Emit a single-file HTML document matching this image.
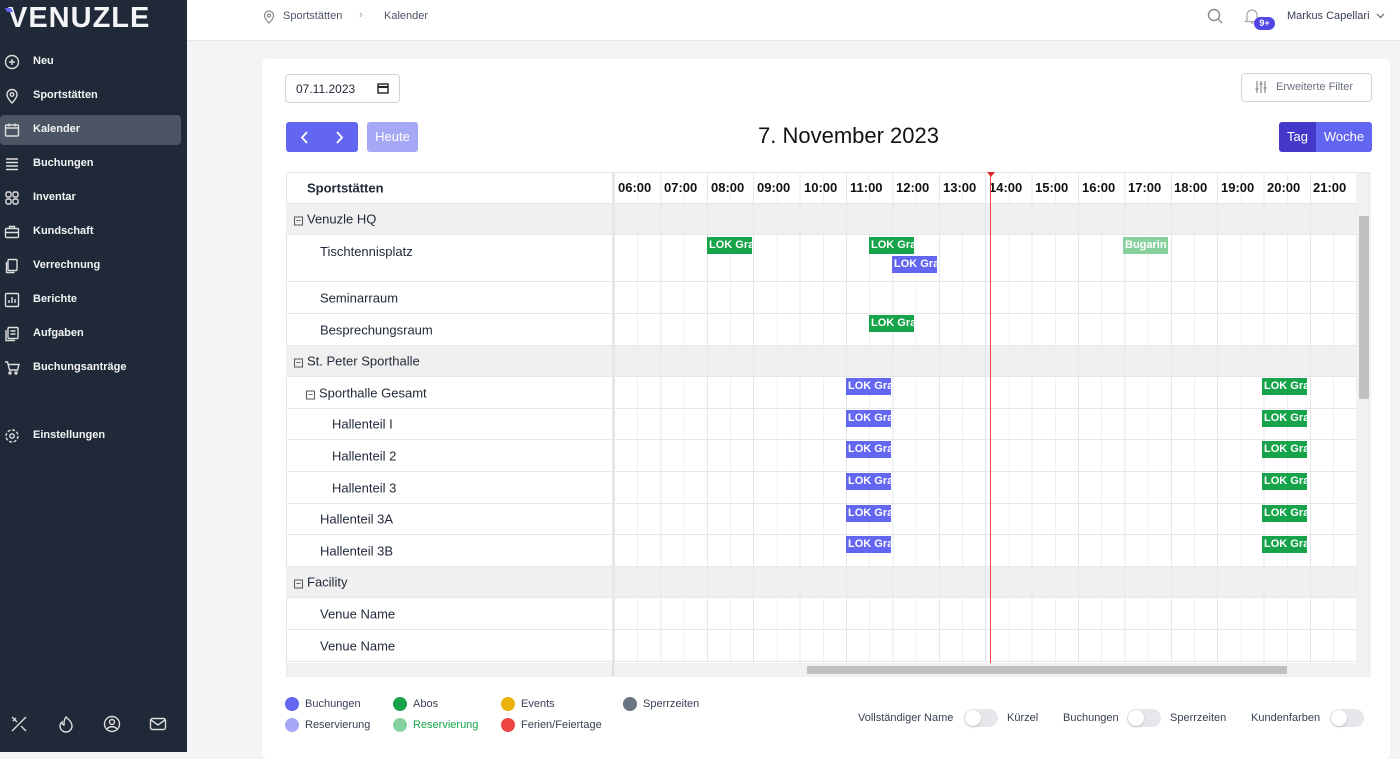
<!DOCTYPE html>
<html><head><meta charset="utf-8"><style>
*{box-sizing:border-box;margin:0;padding:0}
body{width:1400px;height:752px;overflow:hidden;background:#f3f4f6;font-family:"Liberation Sans",sans-serif;position:relative;color:#1f2937}
.a{position:absolute}
#sb{left:0;top:0;width:187px;height:752px;background:#1f2937;color:#fff}
.nav{position:absolute;left:0;width:187px;height:30px;font-size:11px;font-weight:bold;color:#f3f4f6}
.nav span{position:absolute;left:33px;top:8px}
.nav svg{position:absolute;left:4px;top:7px}
#top{left:187px;top:0;width:1213px;height:41px;background:#fff;border-bottom:1px solid #e5e7eb}
#card{left:262px;top:59px;width:1128px;height:700px;background:#fff;border-radius:6px}
.row{position:absolute;left:286px;width:1071px;border-bottom:1px solid #e5e7eb;font-size:13px}
.row .l{position:absolute;top:50%;transform:translateY(-50%)}
.g{background:#f0f0f0}
.ev{position:absolute;height:17px;width:45px;color:#fff;font-size:11px;font-weight:bold;line-height:17px;padding-left:2px;overflow:hidden;white-space:nowrap}
.gr{background:#16a34a}.bl{background:#6366f1}
.box{display:inline-block;width:9px;height:9px;border:1px solid #555;font-size:9px;line-height:7px;text-align:center;margin-right:4px;vertical-align:0px}
.hr{position:absolute;top:180px;font-size:13px;font-weight:bold;color:#111}
.lg{position:absolute;font-size:11px;color:#374151}
.lg i{position:absolute;left:-20px;top:-1px;width:14px;height:14px;border-radius:50%}
.tg{position:absolute;width:34px;height:18px;border-radius:9px;background:#e5e7eb}
.tg:after{content:"";position:absolute;left:1px;top:1px;width:16px;height:16px;border-radius:50%;background:#fff;box-shadow:0 1px 2px rgba(0,0,0,.2)}
</style></head><body>
<div id="sb" class="a">
<div class="a" style="left:8px;top:2px;font-size:29px;font-weight:bold;letter-spacing:1px;color:#f3f4f6">VENUZLE</div>
<div class="a" style="left:6px;top:8px;width:6px;height:4px;background:#6366f1;transform:skewX(30deg)"></div>
<div class="a" style="left:0;top:115px;width:181px;height:30px;background:#4b5563;border-radius:4px"></div>
<div class="nav" style="top:47px"><svg width="16" height="16" fill="none" stroke="#ddd" stroke-width="1.4"><circle cx="8" cy="8" r="6.5"/><path d="M8 5v6M5 8h6"/></svg><span>Neu</span></div>
<div class="nav" style="top:81px"><svg width="16" height="16" fill="none" stroke="#ddd" stroke-width="1.4"><path d="M8 15s-5-5-5-8.5a5 5 0 0110 0C13 10 8 15 8 15z"/><circle cx="8" cy="6.5" r="1.8"/></svg><span>Sportstätten</span></div>
<div class="nav" style="top:115px"><svg width="16" height="16" fill="none" stroke="#ddd" stroke-width="1.4"><rect x="1.5" y="3" width="13" height="11" rx="1"/><path d="M1.5 6h13M5 1.5v3M11 1.5v3"/></svg><span>Kalender</span></div>
<div class="nav" style="top:149px"><svg width="16" height="16" fill="none" stroke="#ddd" stroke-width="1.4"><path d="M2 3h12M2 6.5h12M2 10h12M2 13.5h12"/></svg><span>Buchungen</span></div>
<div class="nav" style="top:183px"><svg width="16" height="16" fill="none" stroke="#ddd" stroke-width="1.4"><rect x="2" y="2" width="5" height="5" rx="1.5"/><rect x="9" y="2" width="5" height="5" rx="1.5"/><rect x="2" y="9" width="5" height="5" rx="1.5"/><rect x="9" y="9" width="5" height="5" rx="1.5"/></svg><span>Inventar</span></div>
<div class="nav" style="top:217px"><svg width="16" height="16" fill="none" stroke="#ddd" stroke-width="1.4"><rect x="1.5" y="4.5" width="13" height="9" rx="1"/><path d="M5.5 4.5V2.5h5v2M1.5 8.5h13"/></svg><span>Kundschaft</span></div>
<div class="nav" style="top:251px"><svg width="16" height="16" fill="none" stroke="#ddd" stroke-width="1.4"><rect x="4" y="1.5" width="9" height="11" rx="1"/><path d="M2.5 4v10.5h8"/></svg><span>Verrechnung</span></div>
<div class="nav" style="top:285px"><svg width="16" height="16" fill="none" stroke="#ddd" stroke-width="1.4"><rect x="1.5" y="1.5" width="13" height="13" rx="1"/><path d="M5 11V8M8 11V5M11 11V7"/></svg><span>Berichte</span></div>
<div class="nav" style="top:319px"><svg width="16" height="16" fill="none" stroke="#ddd" stroke-width="1.4"><rect x="4" y="1.5" width="10" height="11" rx="1"/><path d="M2 4v10.5h9M6.5 5h5M6.5 8h5"/></svg><span>Aufgaben</span></div>
<div class="nav" style="top:353px"><svg width="16" height="16" fill="none" stroke="#ddd" stroke-width="1.4"><path d="M1 2h2.5l2 8h8l1.5-5.5H4.5"/><circle cx="6" cy="13" r="1"/><circle cx="12" cy="13" r="1"/></svg><span>Buchungsanträge</span></div>
<div class="nav" style="top:421px"><svg width="16" height="16" fill="none" stroke="#ddd" stroke-width="1.4"><circle cx="8" cy="8" r="2.2"/><circle cx="8" cy="8" r="6" stroke-dasharray="3 1.7"/></svg><span>Einstellungen</span></div>
<svg class="a" style="left:10px;top:715px" width="18" height="18" fill="none" stroke="#ddd" stroke-width="1.4"><path d="M2 16L16 2M2 2l5 5M11 11l5 5M3 6l3-3"/></svg>
<svg class="a" style="left:57px;top:715px" width="18" height="18" fill="none" stroke="#ddd" stroke-width="1.4"><path d="M9 2c3 3 6 5 6 9a6 6 0 01-12 0c0-2 1-3 2-4 0 2 1 3 2 3 0-3 0-5 2-8z"/></svg>
<svg class="a" style="left:103px;top:715px" width="18" height="18" fill="none" stroke="#ddd" stroke-width="1.4"><circle cx="9" cy="9" r="7.5"/><circle cx="9" cy="7" r="2.5"/><path d="M4 14c2-3 8-3 10 0"/></svg>
<svg class="a" style="left:149px;top:715px" width="18" height="18" fill="none" stroke="#ddd" stroke-width="1.4"><rect x="1.5" y="3.5" width="15" height="11" rx="2"/><path d="M2 5l7 5 7-5"/></svg>
</div>
<div id="top" class="a">
<svg class="a" style="left:76px;top:10px" width="12" height="14" fill="none" stroke="#888" stroke-width="1.2"><path d="M6 13s-4.5-4-4.5-7.5a4.5 4.5 0 019 0C10.5 9 6 13 6 13z"/><circle cx="6" cy="5.5" r="1.5"/></svg>
<div class="a" style="left:96px;top:10px;font-size:11px;color:#4b5563">Sportstätten</div>
<div class="a" style="left:172px;top:9px;font-size:11px;color:#9ca3af">›</div>
<div class="a" style="left:197px;top:10px;font-size:11px;color:#4b5563">Kalender</div>
<svg class="a" style="left:1020px;top:8px" width="16" height="16" fill="none" stroke="#888" stroke-width="1.4"><circle cx="7" cy="7" r="5.5"/><path d="M11 11l4 4"/></svg>
<svg class="a" style="left:1057px;top:7px" width="16" height="18" fill="none" stroke="#aaa" stroke-width="1.3"><path d="M3 13V8a5 5 0 0110 0v5l1.5 1.5h-13zM6.5 16h3"/></svg>
<div class="a" style="left:1067px;top:17px;width:21px;height:13px;border-radius:7px;background:#4f46e5;color:#fff;font-size:9px;font-weight:bold;text-align:center;line-height:13px">9+</div>
<div class="a" style="left:1100px;top:10px;font-size:11px;color:#374151">Markus Capellari</div>
<svg class="a" style="left:1189px;top:13px" width="9" height="6" fill="none" stroke="#666" stroke-width="1.2"><path d="M1 1l3.5 3.5L8 1"/></svg>
</div>
<div id="card" class="a"></div>
<div class="a" style="left:285px;top:74px;width:115px;height:29px;border:1px solid #d1d5db;border-radius:4px;background:#fff;font-size:12px;padding:7px 10px">07.11.2023</div>
<svg class="a" style="left:377px;top:82px" width="12" height="12" fill="none" stroke="#222" stroke-width="1.4"><rect x="1" y="2" width="10" height="9"/><path d="M1 5h10" stroke-width="2"/></svg>
<div class="a" style="left:1241px;top:73px;width:131px;height:29px;border:1px solid #d1d5db;border-radius:4px;font-size:11px;color:#6b7280;padding:7px 0 0 34px">Erweiterte Filter</div>
<svg class="a" style="left:1255px;top:80px" width="12" height="14" fill="none" stroke="#888" stroke-width="1.2"><path d="M2 1v12M6 1v12M10 1v12M0.5 9h3M4.5 4h3M8.5 8h3"/></svg>
<div class="a" style="left:286px;top:122px;width:72px;height:30px;background:#6366f1;border-radius:3px"></div>
<svg class="a" style="left:299px;top:131px" width="48" height="13" fill="none" stroke="#fff" stroke-width="1.8"><path d="M8 1L3 6.5 8 12M38 1l5 5.5-5 5.5"/></svg>
<div class="a" style="left:367px;top:122px;width:51px;height:30px;background:#a5a8f5;border-radius:3px;color:#fff;font-size:13px;text-align:center;line-height:30px">Heute</div>
<div class="a" style="left:758px;top:123px;font-size:22px;color:#111">7. November 2023</div>
<div class="a" style="left:1279px;top:122px;width:37px;height:30px;background:#4338ca;color:#fff;font-size:13px;text-align:center;line-height:30px;border-radius:3px 0 0 3px">Tag</div>
<div class="a" style="left:1316px;top:122px;width:56px;height:30px;background:#6366f1;color:#fff;font-size:13px;text-align:center;line-height:30px;border-radius:0 3px 3px 0">Woche</div>

<!-- table -->
<div class="a" style="left:286px;top:172px;width:1085px;height:505px;border:1px solid #e5e7eb;background:#fff"></div>
<div class="a" style="left:286px;top:204px;width:1071px;height:459px;"></div>
<div class="row g" style="top:204px;height:31px"></div>
<div class="row g" style="top:346px;height:31px"></div>
<div class="row g" style="top:567px;height:31px"></div>
<div class="a" style="left:614px;top:172px;width:743px;height:491px;background:repeating-linear-gradient(90deg,#e5e7eb 0 1px,transparent 1px 23.2px,#f0f0f0 23.2px 24.2px,transparent 24.2px 46.4px)"></div>
<div class="a" style="left:286px;top:203px;width:1071px;border-top:1px solid #e5e7eb"></div>
<div class="a" style="left:612px;top:172px;width:2px;height:491px;background:#e5e7eb"></div>
<div class="row" style="top:172px;height:32px;border:none"><span class="l" style="left:21px;font-weight:bold">Sportstätten</span></div>
<div class="row" style="top:204px;height:31px"><span class="l" style="left:8px"><span class="box">−</span>Venuzle HQ</span></div>
<div class="row" style="top:235px;height:47px"><span class="a" style="left:34px;top:9px">Tischtennisplatz</span></div>
<div class="row" style="top:282px;height:32px"><span class="l" style="left:34px">Seminarraum</span></div>
<div class="row" style="top:314px;height:32px"><span class="l" style="left:34px">Besprechungsraum</span></div>
<div class="row" style="top:346px;height:31px"><span class="l" style="left:8px"><span class="box">−</span>St. Peter Sporthalle</span></div>
<div class="row" style="top:377px;height:32px"><span class="l" style="left:20px"><span class="box">−</span>Sporthalle Gesamt</span></div>
<div class="row" style="top:409px;height:31px"><span class="l" style="left:46px">Hallenteil I</span></div>
<div class="row" style="top:440px;height:32px"><span class="l" style="left:46px">Hallenteil 2</span></div>
<div class="row" style="top:472px;height:32px"><span class="l" style="left:46px">Hallenteil 3</span></div>
<div class="row" style="top:504px;height:31px"><span class="l" style="left:34px">Hallenteil 3A</span></div>
<div class="row" style="top:535px;height:32px"><span class="l" style="left:34px">Hallenteil 3B</span></div>
<div class="row" style="top:567px;height:31px"><span class="l" style="left:8px"><span class="box">−</span>Facility</span></div>
<div class="row" style="top:598px;height:32px"><span class="l" style="left:34px">Venue Name</span></div>
<div class="row" style="top:630px;height:32px"><span class="l" style="left:34px">Venue Name</span></div>
<div class="hr" style="left:618px">06:00</div><div class="hr" style="left:664px">07:00</div><div class="hr" style="left:711px">08:00</div><div class="hr" style="left:757px">09:00</div><div class="hr" style="left:804px">10:00</div><div class="hr" style="left:850px">11:00</div><div class="hr" style="left:896px">12:00</div><div class="hr" style="left:943px">13:00</div><div class="hr" style="left:989px">14:00</div><div class="hr" style="left:1035px">15:00</div><div class="hr" style="left:1082px">16:00</div><div class="hr" style="left:1128px">17:00</div><div class="hr" style="left:1174px">18:00</div><div class="hr" style="left:1221px">19:00</div><div class="hr" style="left:1267px">20:00</div><div class="hr" style="left:1313px">21:00</div>
<div class="a" style="left:990px;top:176px;width:1px;height:487px;background:#ef4444"></div>
<div class="a" style="left:987px;top:172px;border-left:4px solid transparent;border-right:4px solid transparent;border-top:5px solid #dc2626"></div>
<div class="ev gr" style="left:707px;top:237px">LOK Graz</div>
<div class="ev gr" style="left:869px;top:237px">LOK Graz</div>
<div class="ev bl" style="left:892px;top:256px">LOK Graz</div>
<div class="ev" style="left:1123px;top:237px;background:#86d19e">Bugarin</div>
<div class="ev gr" style="left:869px;top:315px">LOK Graz</div>
<div class="ev bl" style="left:846px;top:378px">LOK Graz</div><div class="ev gr" style="left:1262px;top:378px">LOK Graz</div>
<div class="ev bl" style="left:846px;top:410px">LOK Graz</div><div class="ev gr" style="left:1262px;top:410px">LOK Graz</div>
<div class="ev bl" style="left:846px;top:441px">LOK Graz</div><div class="ev gr" style="left:1262px;top:441px">LOK Graz</div>
<div class="ev bl" style="left:846px;top:473px">LOK Graz</div><div class="ev gr" style="left:1262px;top:473px">LOK Graz</div>
<div class="ev bl" style="left:846px;top:505px">LOK Graz</div><div class="ev gr" style="left:1262px;top:505px">LOK Graz</div>
<div class="ev bl" style="left:846px;top:536px">LOK Graz</div><div class="ev gr" style="left:1262px;top:536px">LOK Graz</div>
<!-- scrollbars -->
<div class="a" style="left:1357px;top:173px;width:14px;height:504px;background:#f1f1f1"></div>
<div class="a" style="left:1359px;top:216px;width:10px;height:183px;background:#c1c1c1"></div>
<div class="a" style="left:287px;top:663px;width:1070px;height:14px;background:#f1f1f1"></div>
<div class="a" style="left:807px;top:666px;width:480px;height:8px;background:#c1c1c1"></div>
<div class="a" style="left:612px;top:663px;width:2px;height:14px;background:#ddd"></div>
<!-- legend -->
<div class="lg" style="left:305px;top:698px"><i style="background:#6366f1"></i>Buchungen</div>
<div class="lg" style="left:305px;top:719px"><i style="background:#a5a8f5"></i>Reservierung</div>
<div class="lg" style="left:413px;top:698px"><i style="background:#16a34a"></i>Abos</div>
<div class="lg" style="left:413px;top:719px;color:#16a34a"><i style="background:#86d19e"></i>Reservierung</div>
<div class="lg" style="left:521px;top:698px"><i style="background:#eab308"></i>Events</div>
<div class="lg" style="left:521px;top:719px"><i style="background:#ef4444"></i>Ferien/Feiertage</div>
<div class="lg" style="left:643px;top:698px"><i style="background:#6b7280"></i>Sperrzeiten</div>
<div class="lg" style="left:858px;top:712px">Vollständiger Name</div><div class="tg" style="left:964px;top:709px"></div><div class="lg" style="left:1007px;top:712px">Kürzel</div>
<div class="lg" style="left:1063px;top:712px">Buchungen</div><div class="tg" style="left:1127px;top:709px"></div><div class="lg" style="left:1170px;top:712px">Sperrzeiten</div>
<div class="lg" style="left:1251px;top:712px">Kundenfarben</div><div class="tg" style="left:1330px;top:709px"></div>
</body></html>
